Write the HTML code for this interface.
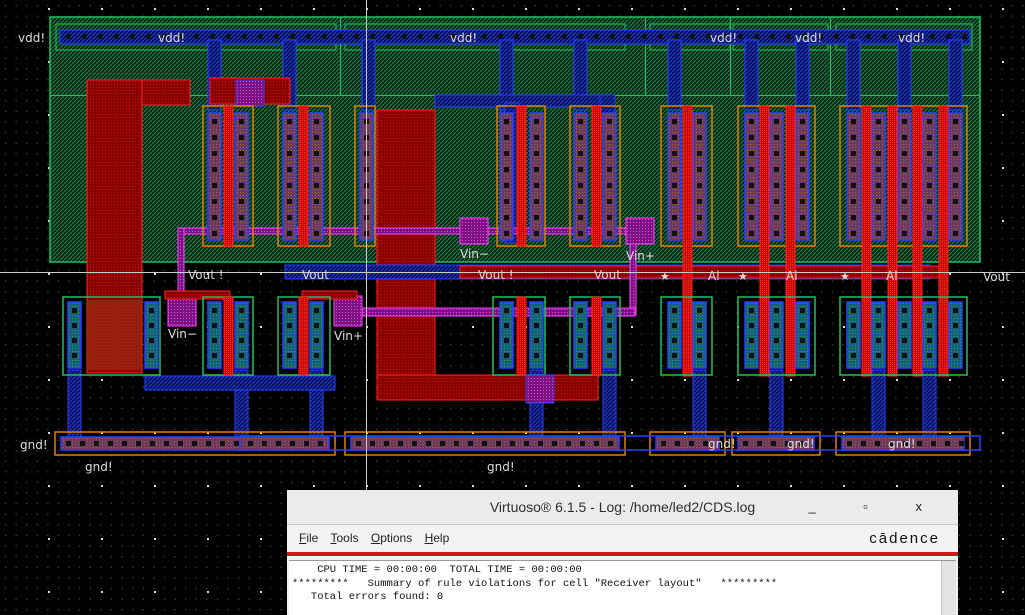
<!DOCTYPE html>
<html><head><meta charset="utf-8">
<style>
html,body{margin:0;padding:0;background:#000;width:1025px;height:615px;overflow:hidden}
#win{position:absolute;left:287px;top:490px;width:671px;height:125px;background:#f0f0f0;border-radius:5px 5px 0 0;font-family:"Liberation Sans",sans-serif}
#tb{height:34px;background:#ebebeb;border-bottom:1px solid #c8c8c8;text-align:center;line-height:34px;font-size:14px;color:#2e2e2e}
#ctl{position:absolute;right:14px;top:0;font-size:13px;color:#222;letter-spacing:22px}
#mb{height:27px;line-height:27px;font-size:12px;color:#222;padding-left:12px;background:#f3f3f3;position:relative}
#mb span{margin-right:9px}
#cad{position:absolute;right:9px;top:0;font-size:15px;letter-spacing:2px;color:#111}
#red{height:4px;background:#d01818;margin-top:0}
#log{position:absolute;top:70px;left:2px;right:2px;bottom:0;background:#fff;border-top:1px solid #999;font-family:"Liberation Mono",monospace;font-size:10.5px;line-height:13.5px;color:#111;padding:3px 3px;white-space:pre}
#sb{position:absolute;right:2px;top:71px;width:14px;bottom:0;background:#e4e4e4;border-left:1px solid #ccc}
</style></head><body>
<svg id="s" width="1025" height="615" style="position:absolute;left:0;top:0" xmlns="http://www.w3.org/2000/svg">
<defs>
<pattern id="grid" width="10.6" height="10.6" patternUnits="userSpaceOnUse"><rect x="5" y="5" width="1" height="1" fill="#777"/></pattern>
<pattern id="grid2" width="53" height="53" patternUnits="userSpaceOnUse" x="48" y="8"><rect x="0" y="0" width="2" height="2" fill="#ddd"/></pattern>
<pattern id="nw" width="4" height="4" patternUnits="userSpaceOnUse"><rect width="4" height="4" fill="#0a2a16"/><path d="M0 4L4 0" stroke="#25804a" stroke-width="1"/></pattern>
<pattern id="poly" width="3" height="3" patternUnits="userSpaceOnUse"><rect width="3" height="3" fill="#880000"/><rect width="1" height="1" fill="#c81010"/></pattern>
<pattern id="polyb" width="2" height="2" patternUnits="userSpaceOnUse"><rect width="2" height="2" fill="#c80808"/><rect width="1" height="1" fill="#ff3018"/></pattern>
<pattern id="m1" width="4" height="4" patternUnits="userSpaceOnUse"><rect width="4" height="4" fill="#08105a"/><path d="M0 4L4 0" stroke="#2038c0" stroke-width="1.2"/></pattern>
<pattern id="pd" width="3" height="3" patternUnits="userSpaceOnUse"><rect width="3" height="3" fill="#6a3a60"/><rect width="1" height="1" fill="#b06028"/></pattern>
<pattern id="nd" width="3" height="3" patternUnits="userSpaceOnUse"><rect width="3" height="3" fill="#15607a"/><rect width="1" height="1" fill="#28a048"/></pattern>
<pattern id="mg" width="3" height="3" patternUnits="userSpaceOnUse"><rect width="3" height="3" fill="#7a1480"/><rect width="1" height="1" fill="#f040f0"/></pattern>
</defs>
<rect width="1025" height="615" fill="#000"/>
<rect width="1025" height="615" fill="url(#grid)"/>
<rect width="1025" height="615" fill="url(#grid2)"/>
<g id="g"></g>
</svg>
<div id="win">
<div id="tb">Virtuoso® 6.1.5 - Log: /home/led2/CDS.log<span id="ctl">_ ▫ x</span></div>
<div id="mb"><span><u>F</u>ile</span> <span><u>T</u>ools</span> <span><u>O</u>ptions</span> <span><u>H</u>elp</span><span id="cad">cādence</span></div>
<div id="red"></div>
<div id="log">    CPU TIME = 00:00:00  TOTAL TIME = 00:00:00
*********   Summary of rule violations for cell "Receiver layout"   *********
   Total errors found: 0</div>
<div id="sb"></div>
</div>
<script>
var g=document.getElementById('g'),NS='http://www.w3.org/2000/svg';
function R(x,y,w,h,f,s,sw){var r=document.createElementNS(NS,'rect');r.setAttribute('x',x);r.setAttribute('y',y);r.setAttribute('width',w);r.setAttribute('height',h);r.setAttribute('fill',f||'none');if(s){r.setAttribute('stroke',s);r.setAttribute('stroke-width',sw||1);}g.appendChild(r);}
function T(x,y,t,fs){var e=document.createElementNS(NS,'text');e.setAttribute('x',x);e.setAttribute('y',y);e.setAttribute('fill','#ddd');e.setAttribute('font-family','DejaVu Sans,sans-serif');e.setAttribute('font-size',fs||12);e.textContent=t;g.appendChild(e);}
R(50,17,930,245,'url(#nw)','#20c060',1.5);
R(50,95,930,1,'#20c060');
[340,645,730,830].forEach(function(x){R(x,17,1,78,'#20c060');});
R(56,24,280,26,'none','#20c060');R(345,24,280,26,'none','#20c060');R(650,24,80,26,'none','#20c060');R(733,24,95,26,'none','#20c060');R(836,24,136,26,'none','#20c060');
R(60,30,910,14,'url(#m1)','#2840ff');
for(var x=66;x<965;x+=16){R(x,34,5,5,'#111');}
function col(x,y1,y2,nd){R(x,y1,13,y2-y1,nd?'url(#nd)':'url(#pd)','#2840ff',1.5);for(var y=y1+6;y<y2-4;y+=(nd?15:16))R(x+4,y,5,5,'#111');}
var P=[[203,253,[208,235],[224]],[278,330,[283,310],[299]],[497,545,[500,530],[517]],[570,620,[574,603],[592]],[661,712,[668,693],[683]],[738,815,[745,770,796],[760,786]],[840,967,[847,872,898,923,949],[862,888,913,939]]];
P.forEach(function(d){d[2].forEach(function(cx,i){if(i%2==0)R(cx,40,13,70,'url(#m1)','#2840ff');else R(cx,370,13,70,'url(#m1)','#2840ff');});});
R(68,370,13,70,'url(#m1)','#2840ff');R(362,40,13,70,'url(#m1)','#2840ff');
R(87,80,103,25,'url(#poly)','#ff2020');R(87,80,55,293,'url(#poly)','#ff2020');
R(377,110,58,290,'url(#poly)','#ff2020');R(377,375,221,25,'url(#poly)','#ff2020');
R(210,78,80,26,'url(#poly)','#ff2020');R(236,80,28,26,'url(#mg)','#2840ff');
R(435,95,180,12,'url(#m1)','#2840ff');R(600,95,15,20,'url(#m1)','#2840ff');R(505,103,14,140,'url(#m1)','#2840ff');
R(145,376,190,14,'url(#m1)','#2840ff');
R(285,265,645,14,'url(#m1)','#2840ff');
R(460,266,480,12,'url(#poly)','#ff2020');
R(178,228,465,6,'url(#mg)','#ff40ff');R(178,228,6,70,'url(#mg)','#ff40ff');R(630,230,6,85,'url(#mg)','#ff40ff');R(355,308,280,8,'url(#mg)','#ff40ff');
R(460,218,28,26,'url(#mg)','#ff40ff');R(626,218,28,26,'url(#mg)','#ff40ff');R(168,298,28,28,'url(#mg)','#ff40ff');R(334,296,28,30,'url(#mg)','#ff40ff');
R(165,291,65,8,'url(#poly)','#ff2020');R(302,291,55,8,'url(#poly)','#ff2020');
P.forEach(function(d){R(d[0],106,d[1]-d[0],140,'none','#e08000',1.5);d[2].forEach(function(cx){col(cx,113,240);});d[3].forEach(function(gx){R(gx,106,9,(gx>650?270:140),'url(#polyb)','#ff2020');});});
R(355,106,20,140,'none','#e08000',1.5);col(360,113,240);
var N=[[63,160,[68,145]],[203,253,[208,235]],[278,330,[283,310]],[493,545,[500,530]],[570,620,[574,603]],[661,712,[668,693]],[738,815,[745,770,796]],[840,967,[847,872,898,923,949]]];
N.forEach(function(d){R(d[0],297,d[1]-d[0],78,'none','#20c060',1.5);d[2].forEach(function(cx){col(cx,302,368,1);});});
R(224,297,9,78,'url(#polyb)','#ff2020');R(299,297,9,78,'url(#polyb)','#ff2020');R(517,297,9,78,'url(#polyb)','#ff2020');R(592,297,9,78,'url(#polyb)','#ff2020');
R(87,300,55,70,'rgba(160,50,20,0.6)');
R(526,375,28,28,'url(#mg)','#2840ff');
[[55,335],[345,625],[650,725],[732,820],[836,970]].forEach(function(s){R(s[0],432,s[1]-s[0],23,'none','#e08000',1.5);R(s[0]+6,437,s[1]-s[0]-12,13,'url(#pd)','#2840ff',1.5);for(var x=s[0]+11;x<s[1]-8;x+=14)R(x,441,5,5,'#111');});
R(240,436,740,14,'none','#2840ff',1.5);
R(0,272,1025,1,'#ccc');R(366,0,1,615,'#ccc');
T(18,42,'vdd!');T(158,42,'vdd!');T(450,42,'vdd!');T(710,42,'vdd!');T(795,42,'vdd!');T(898,42,'vdd!');
T(188,279,'Vout !');T(302,279,'Vout');T(478,279,'Vout !');T(594,279,'Vout');T(983,281,'Vout');
T(660,280,'★',11);T(708,280,'Ai');T(738,280,'★',11);T(786,280,'Ai');T(840,280,'★',11);T(886,280,'Ai');
T(460,258,'Vin−');T(626,260,'Vin+');T(168,338,'Vin−');T(334,340,'Vin+');
T(20,449,'gnd!');T(85,471,'gnd!');T(487,471,'gnd!');T(708,448,'gnd!');T(787,448,'gnd!');T(888,448,'gnd!');
</script>
</body></html>
